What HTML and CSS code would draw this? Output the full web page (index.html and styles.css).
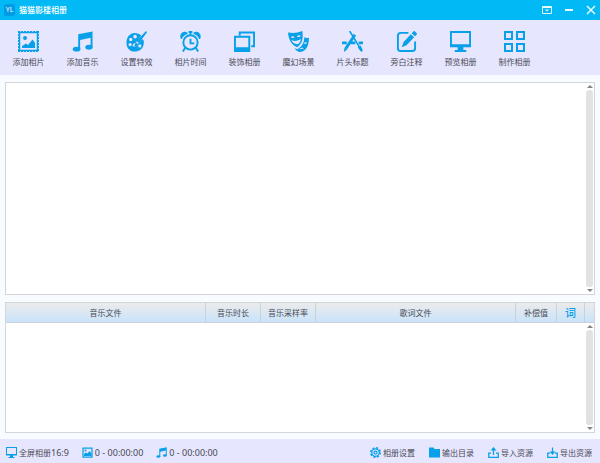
FILE: index.html
```html
<!DOCTYPE html>
<html lang="zh-CN">
<head>
<meta charset="utf-8">
<title>猫猫影楼相册</title>
<link rel="stylesheet" href="styles.css">
</head>
<body>
<svg class="sprite" aria-hidden="true">
  <symbol id="i-photo" viewBox="0 0 21 21">
    <path fill="none" stroke="currentColor" stroke-dasharray="2 1" d="M0 .5h21M0 20.500h21M.5 0v21M20.500 0v21"/>
    <path fill="none" stroke="currentColor" stroke-width="1.500" d="M1.500 1.500h18v18h-18z"/>
    <circle cx="7" cy="7" r="2" fill="currentColor"/>
    <path fill="currentColor" d="M4 17v-2l4-2.500 2 1.500 4.500-5.500L17 12v5z"/>
  </symbol>
  <symbol id="i-music" viewBox="0 0 22 22">
    <path fill="currentColor" d="M6.500 3.500 21.500 .5V17h-2V7L8.500 9.500V19h-2z"/>
    <ellipse cx="4.800" cy="19" rx="4" ry="2.600" fill="currentColor"/>
    <ellipse cx="17.800" cy="17" rx="3.800" ry="2.600" fill="currentColor"/>
  </symbol>
  <symbol id="i-palette" viewBox="0 0 22 22">
    <path fill="currentColor" fill-rule="evenodd" d="M9 2c3 0 5.500 1 7 2.500l-6 8c-2 0-3 1.500-3 3.500 3 1 5-.5 5.500-2.500L17 8.500c2 1 1.800 3 1.500 5C18 18.500 14 21.500 9 21.500 3.500 21.500.5 17.500.5 12S4 2 9 2zM9.500 4a1.900 1.900 0 1 0 0 3.800 1.900 1.900 0 0 0 0-3.800zM5 7.200A1.800 1.800 0 1 0 5 10.800 1.800 1.800 0 0 0 5 7.200zM4.300 12.500a1.700 1.700 0 1 0 0 3.400 1.700 1.700 0 0 0 0-3.400zM14.500 14a1.700 1.700 0 1 0 0 3.400 1.700 1.700 0 0 0 0-3.400z"/>
    <path fill="currentColor" d="M20.500.5c1-.5 1.800.5 1.200 1.300L13.500 12.500 11 10.500zM10.500 12l2 1.500c-.5 2-2 3-4 2.500.8-1 .8-3 2-4z"/>
  </symbol>
  <symbol id="i-clock" viewBox="0 0 22 22">
    <circle cx="11" cy="12" r="7.500" fill="none" stroke="currentColor" stroke-width="2"/>
    <path fill="none" stroke="currentColor" stroke-width="2" d="M11 8v5h4M5.500 17.500 3 21.500M16.500 17.500l2.500 4M11 1v3"/>
    <path fill="currentColor" d="M1 8.500C-1.500 4 3-1.500 8 1.800L8 3C5 4 3 6 2 8.500zM21 8.500C23.500 4 19-1.500 14 1.800V3c3 1 5 3 6 5.500zM9 0h4v2H9z"/>
  </symbol>
  <symbol id="i-frames" viewBox="0 0 22 22">
    <path fill="none" stroke="currentColor" stroke-width="2" d="M6 5V1.500h15V16h-3"/>
    <path fill="currentColor" fill-rule="evenodd" d="M0 5h17v17H0zM2 7v10h13V7z"/>
  </symbol>
  <symbol id="i-mask" viewBox="0 0 22 22">
    <path fill="currentColor" fill-rule="evenodd" d="M0 1.500C5 2.500 10 2 15 0c1 7 .5 13-5.500 17C4 14.500.5 9 0 1.500zM2.800 6.500C4 5 6 5 7 6.500c-1 1-3 1-4.200 0zM9.300 6C10 4.500 12 4 13.300 5c-.8 1.300-2.500 1.800-4 1zM3.500 9.500c3.500 1.500 7 1 10-1-.3 3-1.800 5-4 5.500-2.500-.3-5-2-6-4.500z"/>
    <path fill="currentColor" fill-rule="evenodd" d="M17 6.500c2 1 3 1 5 .5 0 8-3 14-9 15-3-.3-5-1.800-6-4l3 1C15 16 17 12 17 6.500zM16.500 12.500c1 1.300 2.500 1.300 3.500 0-1-.8-2.500-.8-3.500 0zM12 19.500c1.500-1 3-1.200 4.500-.5-.8-2-3.500-1.800-4.500.5z"/>
  </symbol>
  <symbol id="i-tools" viewBox="0 0 22 22">
    <path fill="none" stroke="currentColor" stroke-width="3" d="M13.500 4 4 18.500M0 12.500h5M9 12.500h5M17.500 12.500H22"/>
    <path fill="none" stroke="currentColor" stroke-width="1.700" d="m8 0 11 18"/>
    <path fill="currentColor" d="m2.500 17.500 3 2L2 22zM16.500 17l3-1.800 2 4.300-.3 2.500-2-1z"/>
  </symbol>
  <symbol id="i-edit" viewBox="0 0 22 22">
    <path fill="none" stroke="currentColor" stroke-width="2" d="M13 2H5Q2 2 2 5v13q0 3 3 3h12q3 0 3-3v-7"/>
    <path fill="currentColor" d="m15.500 3.500 3.500 3L11 15l-5 2 2-5.500zM16.500 2.500l1.500-2q1-1 2 0L21.500 2q1 1 0 2L20 5.500z"/>
  </symbol>
  <symbol id="i-screen" viewBox="0 0 22 22">
    <path fill="currentColor" fill-rule="evenodd" d="M0 0h22v17h-8v3h3v2H5v-2h3v-3H0zM2 2v12h18V2z"/>
  </symbol>
  <symbol id="i-grid" viewBox="0 0 21 21">
    <path fill="none" stroke="currentColor" stroke-width="2" d="M1 1h7v7H1zM13 1h7v7h-7zM1 13h7v7H1zM13 13h7v7h-7z"/>
  </symbol>
  <symbol id="i-picture" viewBox="0 0 22 22">
    <path fill="none" stroke="currentColor" stroke-width="2.500" d="M2 2h18v18H2z"/>
    <circle cx="7" cy="7" r="2" fill="currentColor"/>
    <path fill="currentColor" d="M4 18v-4l4-3 3 2 4-5 4 5v5z"/>
  </symbol>
  <symbol id="i-gear" viewBox="0 0 22 22">
    <circle cx="11" cy="11" r="9.500" fill="none" stroke="currentColor" stroke-width="3" stroke-dasharray="4 3.460"/>
    <circle cx="11" cy="11" r="7.500" fill="none" stroke="currentColor" stroke-width="2.500"/>
    <circle cx="11" cy="11" r="3" fill="none" stroke="currentColor" stroke-width="2.500"/>
  </symbol>
  <symbol id="i-folder" viewBox="0 0 22 22">
    <path fill="currentColor" d="M0 1h9l2 3h11v17H0z"/>
  </symbol>
  <symbol id="i-import" viewBox="0 0 22 22">
    <path fill="none" stroke="currentColor" stroke-width="2.500" d="M6 12H1.500v8.500h19V12H16M11 16V5"/>
    <path fill="currentColor" d="m11 0 6 7H5z"/>
  </symbol>
  <symbol id="i-export" viewBox="0 0 22 22">
    <path fill="none" stroke="currentColor" stroke-width="2.500" d="M6 12H1.500v8.500h19V12H16M11 1v10"/>
    <path fill="currentColor" d="m11 16 6-7H5z"/>
  </symbol>
</svg>

<header class="titlebar">
  <span class="logo">YL</span>
  <h1 class="title">猫猫影楼相册</h1>
  <div class="window-controls">
    <button type="button" aria-label="菜单"><svg viewBox="0 0 10 10"><path d="M.5 1.500h9v7h-9zM1 2.500h8"/><path class="solid" d="M3 4.500h4L5 6.500z"/></svg></button>
    <button type="button" aria-label="最小化"><svg viewBox="0 0 10 10"><path class="thick" d="M1 5h8"/></svg></button>
    <button type="button" aria-label="关闭"><svg viewBox="0 0 10 10"><path class="cross" d="m1 1 8 8M9 1 1 9"/></svg></button>
  </div>
</header>

<nav class="toolbar">
  <button type="button"><svg><use href="#i-photo"/></svg>添加相片</button>
  <button type="button"><svg><use href="#i-music"/></svg>添加音乐</button>
  <button type="button"><svg><use href="#i-palette"/></svg>设置特效</button>
  <button type="button"><svg><use href="#i-clock"/></svg>相片时间</button>
  <button type="button"><svg><use href="#i-frames"/></svg>装饰相册</button>
  <button type="button"><svg><use href="#i-mask"/></svg>魔幻场景</button>
  <button type="button"><svg><use href="#i-tools"/></svg>片头标题</button>
  <button type="button"><svg><use href="#i-edit"/></svg>旁白注释</button>
  <button type="button"><svg><use href="#i-screen"/></svg>预览相册</button>
  <button type="button"><svg><use href="#i-grid"/></svg>制作相册</button>
</nav>

<main class="workspace">
  <section class="panel photos" aria-label="相片">
    <div class="scrollbar"><i class="arrow up"></i><i class="thumb"></i><i class="arrow down"></i></div>
  </section>
  <section class="panel tracks" aria-label="音乐">
    <table>
      <colgroup>
        <col><col class="col-medium"><col class="col-medium"><col><col class="col-offset"><col class="col-lyric"><col class="col-end">
      </colgroup>
      <thead>
        <tr><th>音乐文件</th><th>音乐时长</th><th>音乐采样率</th><th>歌词文件</th><th>补偿值</th><th class="lyric">词</th><th></th></tr>
      </thead>
    </table>
    <div class="scrollbar"><i class="arrow up"></i><i class="thumb"></i><i class="arrow down"></i></div>
  </section>
</main>

<footer class="statusbar">
  <span class="item mode"><svg><use href="#i-screen"/></svg><span>全屏相册<span class="num">16:9</span></span></span>
  <span class="item count"><svg><use href="#i-picture"/></svg><span class="num">0 - 00:00:00</span></span>
  <span class="item"><svg><use href="#i-music"/></svg><span class="num">0 - 00:00:00</span></span>
  <div class="actions">
    <button type="button" class="item"><svg><use href="#i-gear"/></svg>相册设置</button>
    <button type="button" class="item"><svg><use href="#i-folder"/></svg>输出目录</button>
    <button type="button" class="item"><svg><use href="#i-import"/></svg>导入资源</button>
    <button type="button" class="item"><svg><use href="#i-export"/></svg>导出资源</button>
  </div>
</footer>
</body>
</html>
```
FILE: styles.css
```css
* { box-sizing: border-box; }

body {
  margin: 0;
  min-height: 100vh;
  display: flex;
  flex-direction: column;
  background: #f8fbff;
  color: #4a4a54;
  font: 8px/12px "Noto Sans", "Noto Sans CJK SC", sans-serif;
}

button {
  padding: 0;
  border: 0;
  background: none;
  color: inherit;
  font: inherit;
  white-space: nowrap;
}

.sprite { position: absolute; width: 0; height: 0; }

.titlebar {
  display: flex;
  align-items: center;
  height: 20px;
  padding: 0 4px;
  background: #00b9f5;
  color: #fff;
}

.logo {
  width: 11px;
  margin-right: 4px;
  border-radius: 2px;
  background: #009be5;
  font-size: 7px;
  text-align: center;
}

.title { margin: 0; font-size: 8px; font-weight: 500; }

.window-controls { display: flex; gap: 12px; margin-left: auto; }
.window-controls button { display: flex; }
.window-controls svg {
  width: 10px;
  height: 10px;
  fill: none;
  stroke: #e8faff;
}
.window-controls .thick { stroke-width: 2; }
.window-controls .cross { stroke-width: 1.5; }
.window-controls .solid { fill: #e8faff; stroke: none; }

.toolbar {
  display: flex;
  gap: 1px;
  height: 55px;
  padding: 11px 2px 0;
  background: #e6e6fe;
}
.toolbar button {
  display: flex;
  flex-direction: column;
  align-items: center;
  gap: 4px;
  width: 53px;
}
.toolbar svg { width: 21px; height: 21px; color: #08a0e9; }

.workspace {
  flex: 1;
  display: flex;
  flex-direction: column;
  gap: 7px;
  padding: 7px 5px 6px;
}

.panel {
  display: flex;
  flex-direction: column;
  border: 1px solid #d3d5d8;
  background: #fff;
}
.photos { flex: 1; }
.tracks { min-height: 131px; }

.scrollbar {
  flex: 1;
  align-self: flex-end;
  display: flex;
  flex-direction: column;
  align-items: center;
  gap: 2px;
  width: 9px;
  padding: 2px 0;
}
.thumb { flex: 1; width: 7px; border-radius: 3px; background: #e2e2e2; }
.arrow { border: 3px solid transparent; }
.up { border-top: 0; border-bottom-color: #848484; }
.down { border-bottom: 0; border-top-color: #848484; }

table { width: 100%; table-layout: fixed; border-collapse: separate; border-spacing: 0; }
.col-medium { width: 55px; }
.col-offset { width: 41px; }
.col-lyric { width: 28px; }
.col-end { width: 9px; }
thead { background: linear-gradient(#ebebeb, #c8e3fc); }
th {
  height: 20px;
  padding: 0;
  border: solid #cbd0d6;
  border-width: 0 1px 1px 0;
  font-weight: 400;
  white-space: nowrap;
}
th:last-child { border-right: 0; }
.lyric { color: #08a0e9; font-size: 11px; font-weight: 500; }

.statusbar {
  display: flex;
  align-items: center;
  height: 24px;
  padding: 3px 8px 0 6px;
  background: #e6e6fe;
}
.item { display: flex; align-items: center; gap: 2px; white-space: nowrap; }
.item svg { width: 11px; height: 11px; color: #08a0e9; }
.num { font-size: 9px; }
.mode, .count { margin-right: 13px; }
.actions { display: flex; gap: 14px; margin-left: auto; }
```
